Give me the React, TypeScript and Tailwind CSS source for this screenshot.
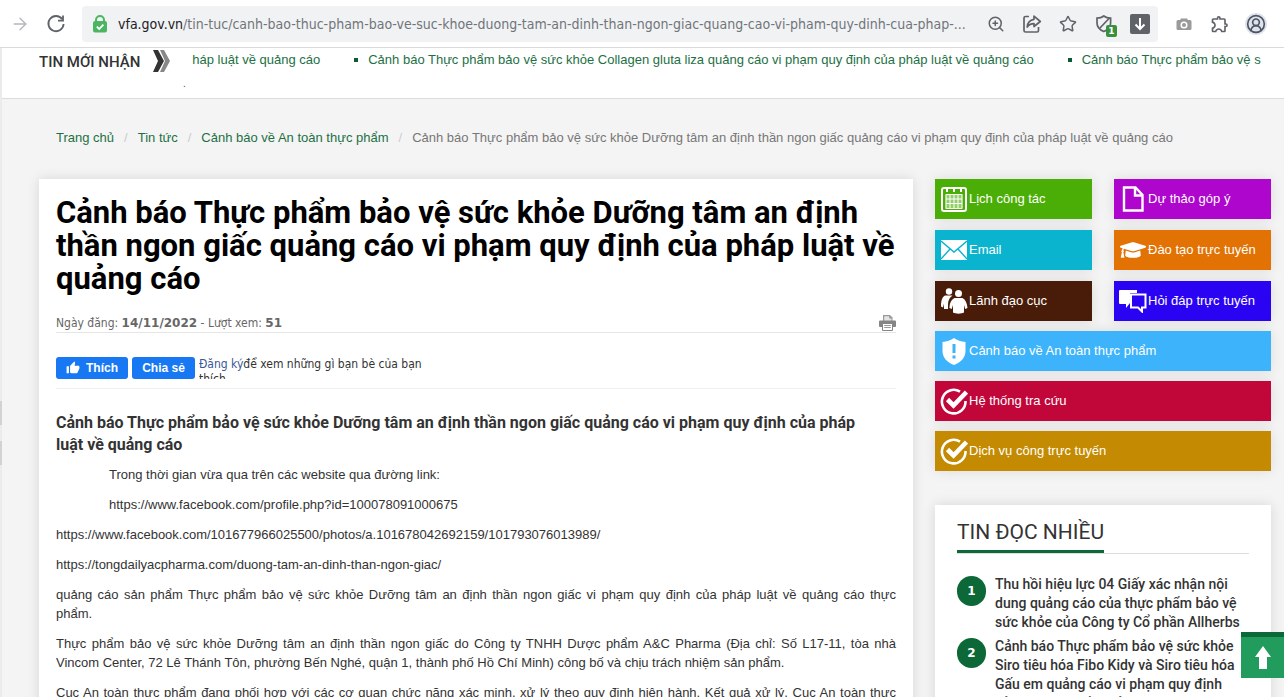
import type { ReactNode } from "react";
import { ArrowRight, CircleUserRound, Star, ZoomIn } from "lucide-react";
import { FaGraduationCap } from "react-icons/fa";
import { MdOutlineExtension, MdThumbUp } from "react-icons/md";

const ARTICLE_TITLE =
  "Cảnh báo Thực phẩm bảo vệ sức khỏe Dưỡng tâm an định thần ngon giấc quảng cáo vi phạm quy định của pháp luật về quảng cáo";

function ToolButton({ label, children }: { label: string; children: ReactNode }) {
  return (
    <button type="button" aria-label={label} className="relative flex h-9 w-9 shrink-0 items-center justify-center">
      {children}
    </button>
  );
}

function BrowserBar() {
  return (
    <div className="flex h-12 shrink-0 items-center border-b border-[#dadada] bg-white pr-2.5 pl-0.5 text-[#5f6368]">
      <ToolButton label="Forward">
        <ArrowRight size={20} strokeWidth={1.6} className="text-[#b5b7ba]" />
      </ToolButton>
      <ToolButton label="Reload">
        <svg width="20" height="20" viewBox="0 0 20 20" fill="none" stroke="currentColor" strokeWidth="1.8">
          <path d="M16.2 5.2A7.6 7.6 0 1 0 17.6 10" />
          <path d="M17 1.6v5h-5" />
        </svg>
      </ToolButton>
      <div className="ml-2 flex h-9 min-w-0 flex-1 items-center rounded-sm bg-[#f1f2f4]">
        <span className="flex w-9 shrink-0 justify-center">
          <svg width="16" height="18" viewBox="0 0 16 18">
            <path d="M4 8V5a4 4 0 0 1 8 0v3" fill="none" stroke="#4cb562" strokeWidth="2" />
            <rect x="1" y="6" width="14" height="11.5" rx="2" fill="#4cb562" />
            <path d="m4.8 11.6 2.4 2.4 4.2-4.4" fill="none" stroke="#fff" strokeWidth="1.8" />
          </svg>
        </span>
        <div className="min-w-0 flex-1 truncate font-['DejaVu_Sans_Condensed','DejaVu_Sans',sans-serif] text-sm text-[#70757a]">
          <span className="text-[#202124]">vfa.gov.vn</span>
          /tin-tuc/canh-bao-thuc-pham-bao-ve-suc-khoe-duong-tam-an-dinh-than-ngon-giac-quang-cao-vi-pham-quy-dinh-cua-phap-...
        </div>
        <ToolButton label="Zoom">
          <ZoomIn size={18} strokeWidth={2} />
        </ToolButton>
        <ToolButton label="Share">
          <svg width="20" height="20" viewBox="0 0 20 20" fill="none" stroke="currentColor" strokeWidth="1.7" strokeLinejoin="round">
            <path d="M7 2.5H3.5A1.5 1.5 0 0 0 2 4v12.500a1.500 1.500 0 0 0 1.500 1.500H15a1.500 1.500 0 0 0 1.500-1.500V13" />
            <path d="M12 2.2 18.3 7.500 12 12.500V9.600c-3.200 0-5.200 1-6.800 3.400.3-4 2.500-7 6.800-7.700Z" />
          </svg>
        </ToolButton>
        <ToolButton label="Bookmark">
          <Star size={18} strokeWidth={2} />
        </ToolButton>
        <ToolButton label="Blocked content">
          <svg width="20" height="20" viewBox="0 0 20 20" fill="none" stroke="currentColor" strokeWidth="1.7">
            <path d="M3 4.200c2.500 0 5-.7 6.800-2.200 1.800 1.500 4.300 2.200 6.800 2.200V9c0 4-2.600 6.800-6.800 8.500C5.600 15.800 3 13 3 9Z" />
            <path d="M15.500 4 5 15" />
          </svg>
          <span className="absolute right-[5px] bottom-[5px] flex h-3 w-[11px] items-center justify-center rounded-xs bg-[#3c8f3f] font-['DejaVu_Sans',sans-serif] text-[9px] leading-3 font-bold text-white">
            1
          </span>
        </ToolButton>
        <ToolButton label="Download">
          <svg width="20" height="20" viewBox="0 0 20 20">
            <rect width="20" height="20" rx="2" fill="#5f6368" />
            <path d="M10 4v11M5.5 10.500 10 15l4.500-4.500" fill="none" stroke="#fff" strokeWidth="2" />
          </svg>
        </ToolButton>
      </div>
      <div className="ml-2 flex">
        <ToolButton label="Screenshot">
          <svg width="16" height="14" viewBox="0 0 16 14">
            <path d="M5 1.500h6L12 3h2a1.500 1.500 0 0 1 1.500 1.500v7A1.500 1.500 0 0 1 14 13H2a1.500 1.500 0 0 1-1.500-1.500v-7A1.500 1.500 0 0 1 2 3h2Z" fill="#9a9a9a" />
            <circle cx="8" cy="8" r="2.800" fill="none" stroke="#fff" strokeWidth="1.500" />
          </svg>
        </ToolButton>
        <ToolButton label="Extensions">
          <MdOutlineExtension size={20} />
        </ToolButton>
        <ToolButton label="Profile">
          <span className="rounded-full bg-[#dfe3ec] p-px">
            <CircleUserRound size={20} strokeWidth={2} className="text-[#4d5566]" />
          </span>
        </ToolButton>
      </div>
    </div>
  );
}

function Ticker() {
  return (
    <div className="h-[51px] shrink-0 border-b border-[#dcdcdc] bg-white pr-3 pl-[37px]">
      <div className="flex items-start">
        <h2 className="shrink-0 pt-1 font-[Roboto,sans-serif] text-[15px] leading-5 font-medium text-[#333]">TIN MỚI NHẬN</h2>
        <svg width="20" height="22" viewBox="0 0 20 22" className="mt-0.5 ml-3 shrink-0">
          <path d="M8 0h4l6 11-6 11H8l5-11Z" fill="#888" />
          <path d="M1 0h5l6 11-6 11H1l5-11Z" fill="#333" />
        </svg>
        <div className="ml-5 flex min-w-0 flex-1 items-center overflow-hidden pt-0.5 text-[13px] leading-5 whitespace-nowrap text-[#1d7044]">
          <a href="#">háp luật về quảng cáo</a>
          <span className="mr-2.5 ml-[34px] h-1 w-1 shrink-0 bg-[#0c5a34]" />
          <a href="#">Cảnh báo Thực phẩm bảo vệ sức khỏe Collagen gluta liza quảng cáo vi phạm quy định của pháp luật về quảng cáo</a>
          <span className="mr-2.5 ml-[34px] h-1 w-1 shrink-0 bg-[#0c5a34]" />
          <a href="#">Cảnh báo Thực phẩm bảo vệ s</a>
        </div>
      </div>
      <p className="pt-1 pl-[144px] text-[10px] leading-4 text-[#555]">.</p>
    </div>
  );
}

function Breadcrumb() {
  return (
    <nav aria-label="Breadcrumb" className="px-[17px] text-[13px] leading-5 text-[#777]">
      <ol className="flex gap-2.5 whitespace-nowrap">
        <li><a href="#" className="text-[#1d7044]">Trang chủ</a></li>
        <li className="text-[#ccc]">/</li>
        <li><a href="#" className="text-[#1d7044]">Tin tức</a></li>
        <li className="text-[#ccc]">/</li>
        <li><a href="#" className="text-[#1d7044]">Cảnh báo về An toàn thực phẩm</a></li>
        <li className="text-[#ccc]">/</li>
        <li>{ARTICLE_TITLE}</li>
      </ol>
    </nav>
  );
}

function Article() {
  return (
    <main className="min-w-0 flex-1 bg-white px-[17px] pt-[17px] shadow-[0_0_12px_rgba(0,0,0,0.12)]">
      <h1 className="font-[Roboto,sans-serif] text-[31px] leading-[33px] font-bold text-black">{ARTICLE_TITLE}</h1>

      <div className="mt-[19px] flex items-center justify-between border-b border-[#e5e5e5] font-['DejaVu_Sans_Condensed','DejaVu_Sans',sans-serif] text-xs leading-[18px] text-[#666]">
        <p>
          Ngày đăng: <b className="font-['DejaVu_Sans',sans-serif]">14/11/2022</b> - Lượt xem:{" "}
          <b className="font-['DejaVu_Sans',sans-serif]">51</b>
        </p>
        <button type="button" aria-label="In">
          <svg width="17" height="16" viewBox="0 0 17 16">
            <path d="M4 0h7l2.500 2.500V6H4Z" fill="#999" />
            <path d="M5.200 1.200h5v2.200h2.200V6H5.200Z" fill="#e4e4e4" />
            <rect y="5.500" width="17" height="6.500" rx="1" fill="#858585" />
            <path d="M3.500 8.500h10V15.500h-10Z" fill="#fff" stroke="#858585" />
            <path d="M5.200 10.500h6.600M5.200 12.500h6.600" stroke="#999" />
          </svg>
        </button>
      </div>

      <div className="mt-6 flex h-8 items-start gap-1 border-b border-[#eee]">
        <button type="button" className="flex h-[22px] w-[72px] items-center justify-center gap-1.5 rounded-[3px] bg-[#1877f2] text-xs font-bold text-white">
          <MdThumbUp size={14} />
          Thích
        </button>
        <button type="button" className="h-[22px] w-[63px] rounded-[3px] bg-[#1877f2] text-xs font-bold text-white">
          Chia sẻ
        </button>
        <p className="h-[22px] w-60 overflow-hidden font-['DejaVu_Sans_Condensed','DejaVu_Sans',sans-serif] text-xs leading-[15px] text-[#333]">
          <a href="#" className="text-[#385898]">Đăng ký</a>để xem những gì bạn bè của bạn thích.
        </p>
      </div>

      <h2 className="mt-[23px] pr-4 font-[Roboto,sans-serif] text-base leading-[22px] font-bold text-[#333]">{ARTICLE_TITLE}</h2>

      <div className="mt-[9px] flex flex-col gap-[11px] text-justify text-[13px] leading-[19px] text-[#333]">
        <p className="pl-[53px]">Trong thời gian vừa qua trên các website qua đường link:</p>
        <p className="pl-[53px]">https://www.facebook.com/profile.php?id=100078091000675</p>
        <p>https://www.facebook.com/101677966025500/photos/a.101678042692159/101793076013989/</p>
        <p>https://tongdailyacpharma.com/duong-tam-an-dinh-than-ngon-giac/</p>
        <p>
          <span className="block [text-align-last:justify]">
            quảng cáo sản phẩm Thực phẩm bảo vệ sức khỏe Dưỡng tâm an định thần ngon giấc vi phạm quy định của pháp
            luật về quảng cáo thực
          </span>
          phẩm.
        </p>
        <p>
          Thực phẩm bảo vệ sức khỏe Dưỡng tâm an định thần ngon giấc do Công ty TNHH Dược phẩm A&amp;C Pharma (Địa
          chỉ: Số L17-11, tòa nhà Vincom Center, 72 Lê Thánh Tôn, phường Bến Nghé, quận 1, thành phố Hồ Chí Minh)
          công bố và chịu trách nhiệm sản phẩm.
        </p>
        <p>
          Cục An toàn thực phẩm đang phối hợp với các cơ quan chức năng xác minh, xử lý theo quy định hiện hành. Kết
          quả xử lý, Cục An toàn thực phẩm sẽ thông tin tới người tiêu dùng.
        </p>
      </div>
    </main>
  );
}

const CheckIcon = () => (
  <svg width="28" height="28" viewBox="0 0 28 28" fill="none" stroke="#fff">
    <path d="M20 4.600A11.800 11.800 0 1 0 25.500 14" strokeWidth="2.600" />
    <path d="m7.500 12.500 6 6L26.500 5" strokeWidth="4.600" />
  </svg>
);

const CalendarIcon = () => (
  <svg width="26" height="27" viewBox="0 0 26 27" fill="none" stroke="#fff">
    <rect x="1" y="2" width="24" height="23" rx="2" strokeWidth="2" />
    <path d="M6 1v5M13 1v5M20 1v5" strokeWidth="2" />
    <rect x="4.500" y="8" width="17" height="15" fill="#fff" fillOpacity="0.4" stroke="none" />
    <path d="M5 8.500h16v14H5ZM5 13h16M5 17.500h16M9 8.500v14M13 8.500v14M17 8.500v14" strokeWidth="1" />
  </svg>
);

const MailIcon = () => (
  <svg width="26" height="20" viewBox="0 0 26 20">
    <rect width="26" height="20" fill="#fff" />
    <path d="m0 1 13 11L26 1M0 19l9-10M26 19 17 9" fill="none" stroke="#0ab4cf" strokeWidth="1.400" />
  </svg>
);

const PeopleIcon = () => (
  <svg width="27" height="26" viewBox="0 0 27 26" fill="#fff">
    <circle cx="8" cy="3.500" r="3.200" />
    <path d="M4 7.500h7.500c-3 2-4.500 5-4.500 9V21H3v-5.500L2 19.500l-2-1C0 13 1 9 4 7.500Z" />
    <circle cx="17.500" cy="5.500" r="3.500" />
    <path d="M13.500 10h8c3 1.500 4.500 5 5 10l-2.300 1-1.200-4v7.500c-3 1.500-8 1.500-11 0V17l-1.300 4L8.500 20c0-5 2-8.500 5-10Z" />
  </svg>
);

const FileIcon = () => (
  <svg width="22" height="26" viewBox="0 0 22 26" fill="none" stroke="#fff" strokeWidth="2.400">
    <path d="M2 1.500h11.500L20.500 9v15.500H2Z" />
    <path d="M13 1.500v8h7.500" />
  </svg>
);

const ChatIcon = () => (
  <svg width="28" height="23" viewBox="0 0 28 23">
    <path d="M1 0h17v3H11v10l-4 5v-4H1a1 1 0 0 1-1-1V1a1 1 0 0 1 1-1Z" fill="#fff" />
    <path d="M12 4.500h14.500v13H23v4l-4-4h-7Z" fill="none" stroke="#fff" strokeWidth="2" />
  </svg>
);

const ShieldIcon = () => (
  <svg width="24" height="27" viewBox="0 0 24 27">
    <path d="M12 0c3 2.400 7 3.600 11.500 4v9c0 7-5 11.500-11.500 14C5.500 24.500.5 20 .5 13V4C5 3.600 9 2.400 12 0Z" fill="#fff" />
    <path d="M12 6v9M12 17.500v3" stroke="#3cb3fa" strokeWidth="3" />
  </svg>
);

const HALF_LINKS = [
  { label: "Lịch công tác", color: "bg-[#4bae06]", icon: <CalendarIcon /> },
  { label: "Dự thảo góp ý", color: "bg-[#ae06cc]", icon: <FileIcon /> },
  { label: "Email", color: "bg-[#0ab4cf]", icon: <MailIcon /> },
  { label: "Đào tạo trực tuyến", color: "bg-[#e17203]", icon: <FaGraduationCap size={26} /> },
  { label: "Lãnh đạo cục", color: "bg-[#491c09]", icon: <PeopleIcon /> },
  { label: "Hỏi đáp trực tuyến", color: "bg-[#2a04f2]", icon: <ChatIcon /> },
];

const WIDE_LINKS = [
  { label: "Cảnh báo về An toàn thực phẩm", color: "bg-[#3cb3fa]", icon: <ShieldIcon /> },
  { label: "Hệ thống tra cứu", color: "bg-[#c10639]", icon: <CheckIcon /> },
  { label: "Dịch vụ công trực tuyến", color: "bg-[#c48b02]", icon: <CheckIcon /> },
];

function QuickLink({ label, color, icon }: { label: string; color: string; icon: ReactNode }) {
  return (
    <a href="#" className={`flex h-10 items-center pl-1 text-[13px] whitespace-nowrap text-white shadow-[0_0_12px_rgba(0,0,0,0.1)] ${color}`}>
      <span className="flex w-[30px] shrink-0 justify-center">{icon}</span>
      {label}
    </a>
  );
}

const MOST_READ = [
  "Thu hồi hiệu lực 04 Giấy xác nhận nội dung quảng cáo của thực phẩm bảo vệ sức khỏe của Công ty Cổ phần Allherbs",
  "Cảnh báo Thực phẩm bảo vệ sức khỏe Siro tiêu hóa Fibo Kidy và Siro tiêu hóa Gấu em quảng cáo vi phạm quy định của pháp luật về quảng cáo",
];

function Sidebar() {
  return (
    <aside className="w-84 shrink-0">
      <div className="grid grid-cols-2 gap-x-[22px] gap-y-[11px]">
        {HALF_LINKS.map((link) => (
          <QuickLink key={link.label} {...link} />
        ))}
      </div>
      <div className="mt-2.5 flex flex-col gap-2.5">
        {WIDE_LINKS.map((link) => (
          <QuickLink key={link.label} {...link} />
        ))}
      </div>

      <section className="mt-[34px] bg-white px-[22px] pt-3 pb-6 shadow-[0_0_12px_rgba(0,0,0,0.12)]">
        <div className="border-b border-[#ddd]">
          <h2 className="inline-block border-b-3 border-[#0c6937] pb-[3px] align-top font-[Roboto,sans-serif] text-[21px] leading-[30px] text-[#333]">
            TIN ĐỌC NHIỀU
          </h2>
        </div>
        <ol className="mt-[21px] flex flex-col gap-[5px]">
          {MOST_READ.map((title, i) => (
            <li key={title} className="flex items-start gap-[9px]">
              <span className="mt-px flex h-[30px] w-[29px] shrink-0 items-center justify-center rounded-full bg-[#0c6937] font-['DejaVu_Sans',sans-serif] text-xs font-bold text-white">
                {i + 1}
              </span>
              <a href="#" className="mr-1 font-[Roboto,sans-serif] text-sm leading-[19px] font-medium text-[#333]">{title}</a>
            </li>
          ))}
        </ol>
      </section>
    </aside>
  );
}

export default function App() {
  return (
    <div className="flex h-screen flex-col overflow-hidden bg-[#f4f4f4] font-['Liberation_Sans',Arial,sans-serif]">
      <BrowserBar />
      <div className="flex min-h-0 flex-1">
        <div className="flex w-0.5 shrink-0 flex-col gap-4 bg-[#ebebeb] pt-[353px]">
          <div className="h-6 bg-[#d2d2d2]" />
          <div className="h-6 bg-[#d2d2d2]" />
        </div>
        <div className="flex min-w-0 flex-1 flex-col">
          <Ticker />
          <div className="min-h-0 flex-1 overflow-hidden pt-[29px] pr-[13px] pl-[37px]">
            <Breadcrumb />
            <div className="mt-[31px] flex gap-[22px]">
              <Article />
              <Sidebar />
            </div>
          </div>
        </div>
      </div>
      <button
        type="button"
        aria-label="Lên đầu trang"
        className="fixed right-0 bottom-[19px] flex h-[46px] w-[43px] items-center justify-center border-t-5 border-[#0c6937] bg-[#229c5c]"
      >
        <svg width="16" height="24" viewBox="0 0 16 24" fill="#fff">
          <path d="M8 0 16 11h-4v12H4V11H0Z" />
        </svg>
      </button>
    </div>
  );
}
